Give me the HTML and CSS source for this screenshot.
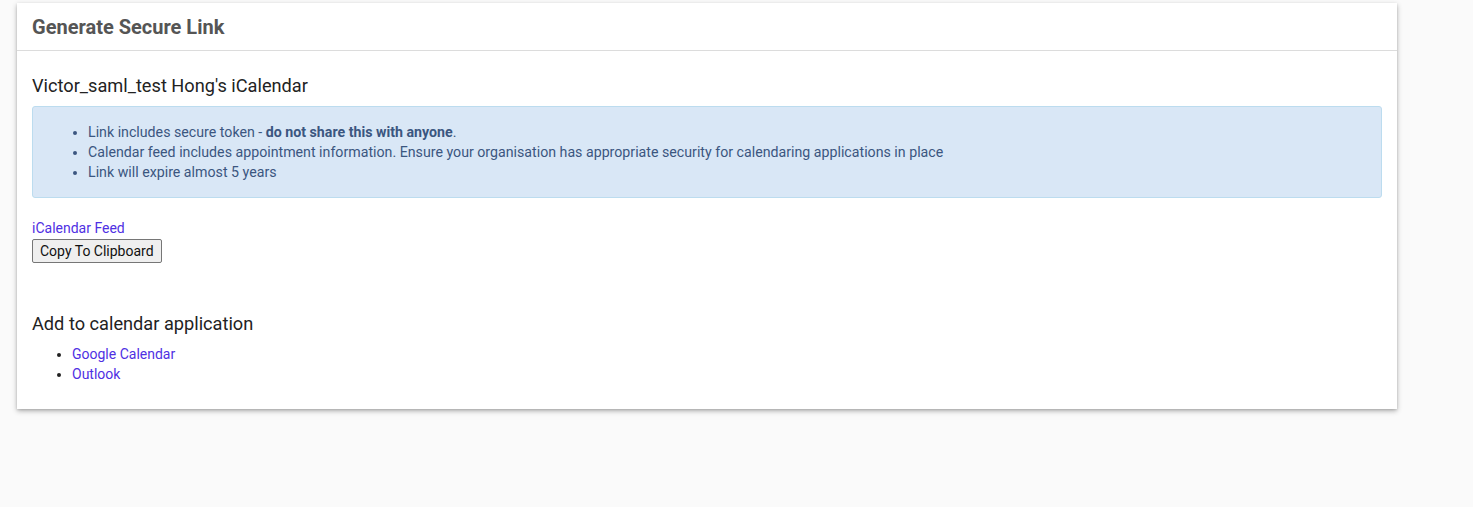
FILE: index.html
```html
<!DOCTYPE html>
<html lang="en">
<head>
<meta charset="utf-8">
<title>Generate Secure Link</title>
<link rel="stylesheet" href="styles.css">
</head>
<body>
<div class="page">
  <div class="card">
    <div class="card-header">
      <h3 class="card-title">Generate Secure Link</h3>
    </div>
    <div class="card-body">
      <h4 class="sub">Victor_saml_test Hong's iCalendar</h4>
      <div class="alert">
        <ul class="alert-list">
          <li>Link includes secure token - <strong>do not share this with anyone</strong>.</li>
          <li>Calendar feed includes appointment information. Ensure your organisation has appropriate security for calendaring applications in place</li>
          <li>Link will expire almost 5 years</li>
        </ul>
      </div>
      <div class="feed">
        <a class="link" href="#">iCalendar Feed</a>
        <div><button class="copy-btn" type="button">Copy To Clipboard</button></div>
      </div>
      <h4 class="sub sub-apps">Add to calendar application</h4>
      <ul class="app-list">
        <li><a class="link" href="#">Google Calendar</a></li>
        <li><a class="link" href="#">Outlook</a></li>
      </ul>
    </div>
  </div>
</div>
</body>
</html>
```

FILE: styles.css
```css
html, body {
  margin: 0;
  padding: 0;
  background: #fafafa;
  font-family: Roboto, "Liberation Sans", Arial, sans-serif;
  font-size: 14px;
  line-height: 20px;
  color: #222;
}

.page {
  padding: 3px 76px 40px 17px;
}

.card {
  background: #fff;
  box-shadow: 0 2px 5px rgba(0, 0, 0, 0.3), 0 1px 2px rgba(0, 0, 0, 0.1);
}

.card-header {
  height: 47px;
  border-bottom: 1px solid #dcdcdc;
  padding: 0 15px;
  display: flex;
  align-items: center;
}

.card-title {
  margin: 0;
  font-size: 20px;
  font-weight: 700;
  color: #555;
  line-height: 24px;
}

.card-body {
  padding: 15px 15px 15px;
}

.sub {
  margin: 10px 0 10px;
  font-size: 18.2px;
  font-weight: 400;
  line-height: 20px;
  color: #222;
}

.sub-apps {
  margin-top: 51px;
}

.alert {
  background: #d9e7f6;
  border: 1px solid #bcdcef;
  border-radius: 3px;
  padding: 15px;
  color: #3b5680;
  font-size: 14.2px;
}

.alert-list {
  margin: 0;
  padding-left: 40px;
}

.alert-list strong {
  font-weight: 700;
}

.feed {
  margin-top: 20px;
}

.link {
  color: #4f30e3;
  text-decoration: none;
}

.copy-btn {
  font-family: Roboto, "Liberation Sans", Arial, sans-serif;
  font-size: 14px;
  height: 24px;
  padding: 0 7px;
  margin-top: 1px;
  background: #efefef;
  border: 1px solid #767676;
  border-radius: 2px;
  color: #111;
  line-height: 20px;
}

.app-list {
  margin: 0 0 10px;
  padding-left: 40px;
}
```
